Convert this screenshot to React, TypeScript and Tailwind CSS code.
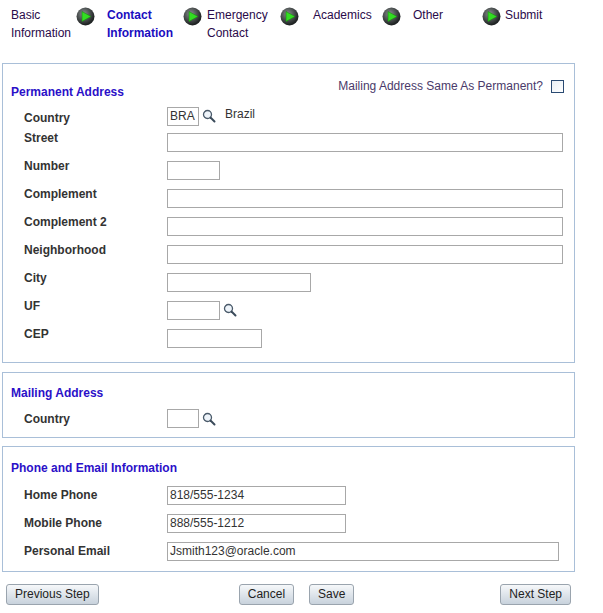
import React from "react";

const Arrow = () => (
  <svg width="19" height="19" viewBox="0 0 19 19" className="shrink-0">
    <defs>
      <radialGradient id="g" cx="40%" cy="35%" r="60%">
        <stop offset="0%" stopColor="#8a9090" />
        <stop offset="100%" stopColor="#202424" />
      </radialGradient>
    </defs>
    <circle cx="9.5" cy="9.5" r="9" fill="url(#g)" />
    <path d="M6 4.5 L15 9.5 L6 14.5 Z" fill="#33dd22" stroke="#1a8a10" strokeWidth="0.6" />
  </svg>
);

const Lens = () => (
  <svg width="14" height="14" viewBox="0 0 14 14" className="ml-[3px]">
    <circle cx="5.5" cy="5.5" r="4" fill="#eef4fa" stroke="#4a5a6a" strokeWidth="1.3" />
    <path d="M8.5 8.5 L12.5 12.5" stroke="#3a4a5a" strokeWidth="2" strokeLinecap="round" />
  </svg>
);

const steps = [
  { t: ["Basic", "Information"], w: "w-[96px]", tw: "w-[65px]", active: false },
  { t: ["Contact", "Information"], w: "w-[100px]", tw: "w-[76px]", active: true },
  { t: ["Emergency", "Contact"], w: "w-[106px]", tw: "w-[73px]", active: false },
  { t: ["Academics"], w: "w-[100px]", tw: "w-[69px]", active: false },
  { t: ["Other"], w: "w-[92px]", tw: "w-[69px]", active: false },
  { t: ["Submit"], w: "", tw: "", active: false },
];

const Input = ({ w, value = "" }: { w: string; value?: string }) => (
  <div className={`${w} h-[19px] border border-[#a8a8a8] bg-white text-[12px] leading-[17px] px-[2px] text-[#333]`}>
    {value}
  </div>
);

const Row = ({ label, children, up = true }: { label: string; children: React.ReactNode; up?: boolean }) => (
  <div className="flex items-center h-[28px]">
    <div className={`w-[164px] pl-[21px] font-bold text-[12px] text-[#333] ${up ? "-mt-[8px]" : ""}`}>{label}</div>
    {children}
  </div>
);

const Btn = ({ children }: { children: React.ReactNode }) => (
  <button className="h-[21px] px-[8px] border border-[#9aa4ae] rounded-[3px] bg-gradient-to-b from-[#f6f8fa] to-[#c8d2dc] text-[12px] leading-[19px] text-[#222]">
    {children}
  </button>
);

export default function App() {
  return (
    <div className="w-[603px] h-[613px] bg-white font-[Liberation_Sans,Arial,sans-serif] text-[12px]">
      <div className="flex pl-[11px] pt-[6px] h-[63px]">
        {steps.map((s, i) => (
          <div key={i} className={`flex ${s.w}`}>
            <div className={`leading-[18px] text-[12px] ${s.tw} ${s.active ? "text-[#1a0dbf] font-bold" : "text-[#2a0a4a]"}`}>
              {s.t.map((l) => (
                <div key={l}>{l}</div>
              ))}
            </div>
            {i < 5 && <div className="pt-[1px]"><Arrow /></div>}
          </div>
        ))}
      </div>

      <div className="mx-[2px] w-[573px] border border-[#a9bfd8] h-[300px]">
        <div className="flex justify-between items-center pl-[8px] pr-[10px] pt-[7px]">
          <div className="text-[#2b10c8] font-bold text-[12px] mt-[12px]">Permanent Address</div>
          <div className="flex items-center gap-[8px] text-[#4a3a6a] text-[12px]">
            Mailing Address Same As Permanent?
            <span className="w-[13px] h-[13px] border border-[#2a4a72] bg-gradient-to-br from-[#e8eef4] to-white" />
          </div>
        </div>
        <div className="mt-[3px]">
          <div className="flex items-center h-[24px]">
            <div className="w-[164px] pl-[21px] font-bold text-[12px] text-[#333] mt-[4px]">Country</div>
            <Input w="w-[32px]" value="BRA" />
            <Lens />
            <span className="ml-[9px] -mt-[5px] text-[#333]">Brazil</span>
          </div>
          <Row label="Street"><Input w="w-[396px]" /></Row>
          <Row label="Number"><Input w="w-[53px]" /></Row>
          <Row label="Complement"><Input w="w-[396px]" /></Row>
          <Row label="Complement 2"><Input w="w-[396px]" /></Row>
          <Row label="Neighborhood"><Input w="w-[396px]" /></Row>
          <Row label="City"><Input w="w-[144px]" /></Row>
          <Row label="UF"><div className="flex items-center"><Input w="w-[53px]" /><Lens /></div></Row>
          <Row label="CEP"><Input w="w-[95px]" /></Row>
        </div>
      </div>

      <div className="mx-[2px] mt-[9px] w-[573px] border border-[#a9bfd8] h-[66px]">
        <div className="text-[#2b10c8] font-bold text-[12px] pl-[8px] pt-[11px]">Mailing Address</div>
        <div className="flex items-center mt-[7px]">
          <div className="w-[164px] pl-[21px] font-bold text-[12px] text-[#333]">Country</div>
          <Input w="w-[32px]" />
          <Lens />
        </div>
      </div>

      <div className="mx-[2px] mt-[8px] w-[573px] border border-[#a9bfd8] h-[126px]">
        <div className="text-[#2b10c8] font-bold text-[12px] pl-[8px] pt-[12px]">Phone and Email Information</div>
        <div className="mt-[4px]">
          <Row up={false} label="Home Phone"><Input w="w-[179px]" value="818/555-1234" /></Row>
          <Row up={false} label="Mobile Phone"><Input w="w-[179px]" value="888/555-1212" /></Row>
          <Row up={false} label="Personal Email"><Input w="w-[392px]" value="Jsmith123@oracle.com" /></Row>
        </div>
      </div>

      <div className="flex items-center mt-[12px] pl-[6px] w-[571px]">
        <Btn>Previous Step</Btn>
        <div className="ml-[140px] flex gap-[15px]">
          <Btn>Cancel</Btn>
          <Btn>Save</Btn>
        </div>
        <div className="ml-auto"><Btn>Next Step</Btn></div>
      </div>
    </div>
  );
}
